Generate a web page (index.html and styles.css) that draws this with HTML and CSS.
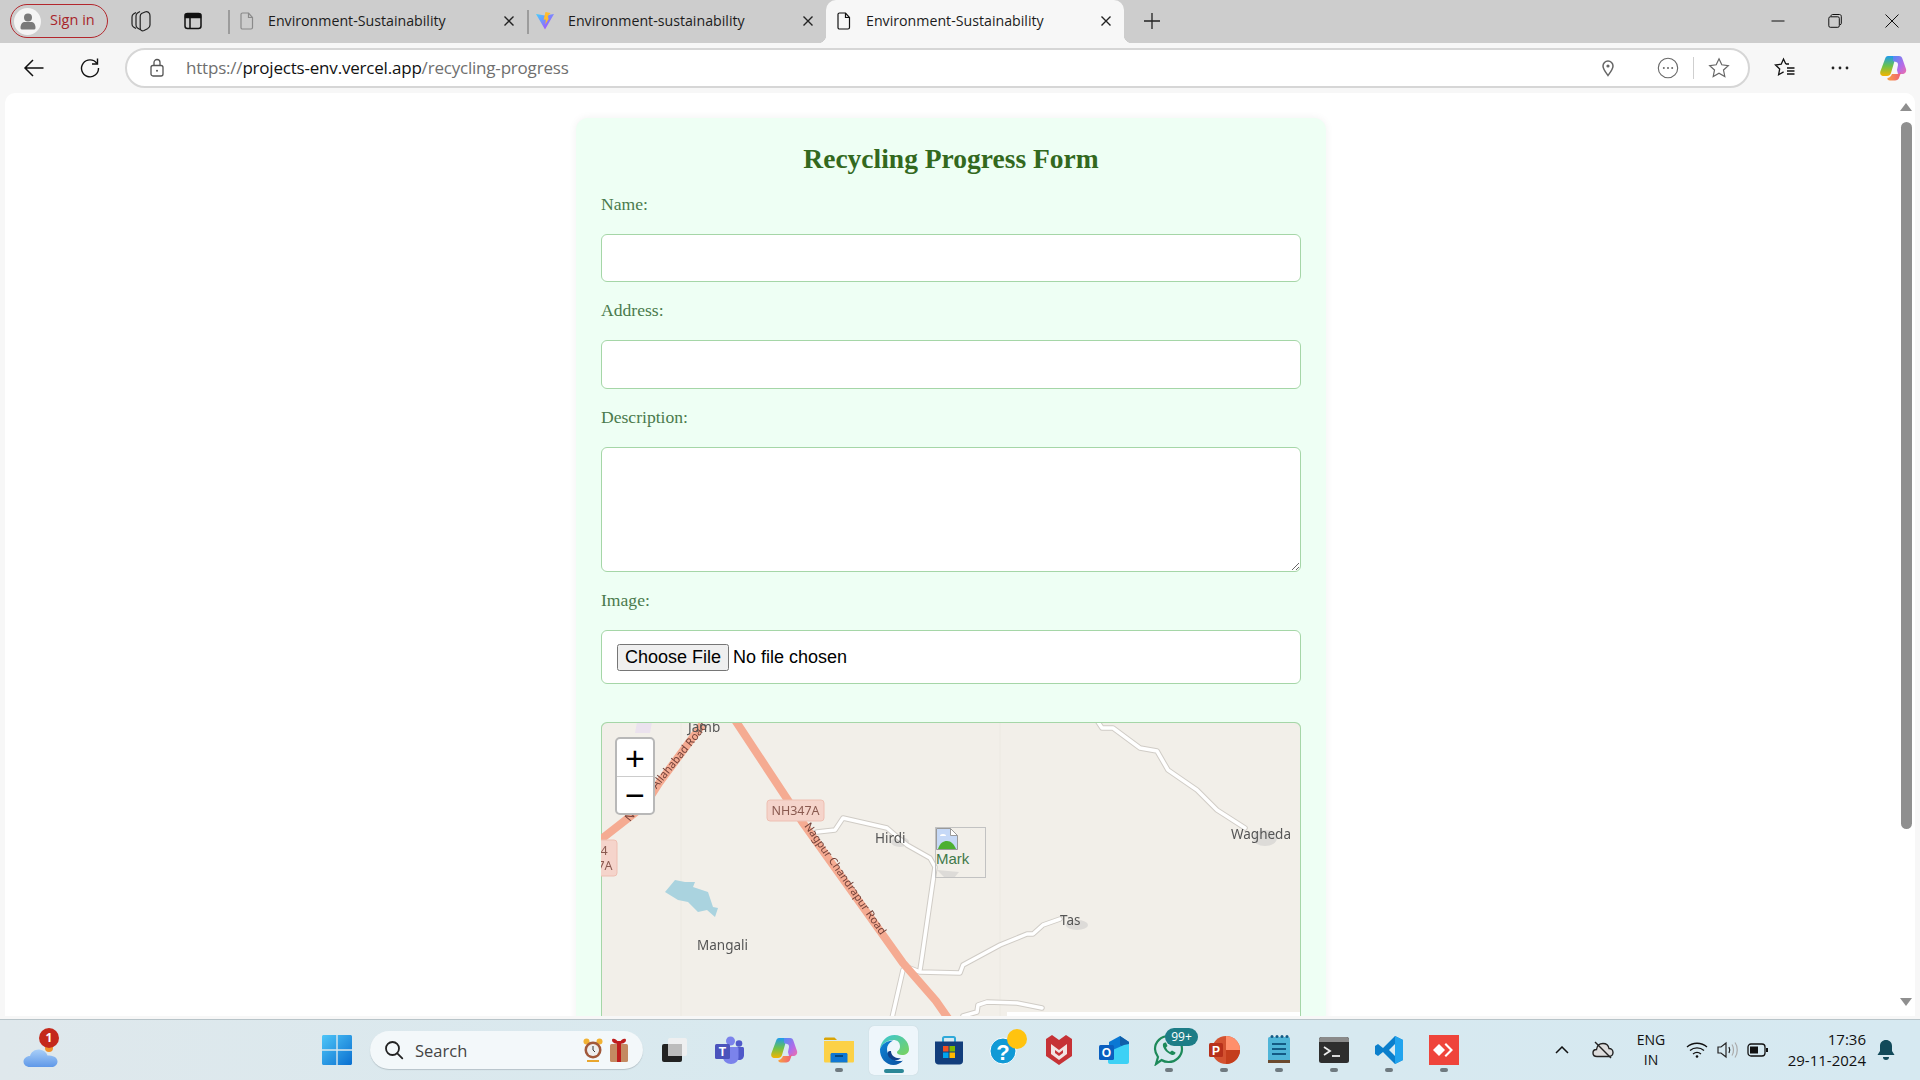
FILE: index.html
```html
<!DOCTYPE html>
<html lang="en">
<head>
<meta charset="utf-8">
<title>Environment-Sustainability</title>
<link rel="stylesheet" href="styles.css">
</head>
<body>
<div class="window">
  <header class="tabstrip">
    <div class="signin">
      <span class="avatar"><svg viewBox="0 0 20 20" width="20" height="20"><circle cx="10" cy="6.500" r="4" fill="#7a7a7a"/><path d="M2.500 17c0-4 2-6 4-6h7c2 0 4 2 4 6 0 1-1 1.500-2 1.500H4.500c-1 0-2-.5-2-1.500z" fill="#7a7a7a"/></svg></span>
      <span class="signin-text">Sign in</span>
    </div>
    <span class="strip-btn first"><svg viewBox="0 0 24 24" width="24" height="24" fill="none" stroke="#222" stroke-width="1.200"><path d="M7 3.500L4.500 5C3.500 5.700 3 6.500 3 8v7c0 1.500.5 2.500 1.500 3L7 19.500"/><path d="M11 2.500L8.500 4C7.500 4.700 7 5.500 7 7v9c0 1.500.5 2.500 1.500 3l2.500 1.500"/><path d="M12.500 4.500L16 3c2-.8 3.500 0 4.500 1.500.5 1 .5 2 .5 3V16c0 2-1 3-2.500 3.800L15 21.500c-2 .8-3.800-.2-3.800-2.500V7.500c0-1.500.4-2.400 1.300-3z"/></svg></span>
    <span class="strip-btn"><svg viewBox="0 0 20 20" width="20" height="20" fill="none" stroke="#111" stroke-width="1.500"><rect x="2" y="2.500" width="16" height="15" rx="2.500"/><path d="M2.500 3.500h15v3h-15z" fill="#111"/><path d="M7 6.500v11"/></svg></span>
    <div class="tab first-tab">
      <svg class="fav" viewBox="0 0 18 20" width="18" height="20" fill="none" stroke="#8a8a8a" stroke-width="1.200"><path d="M4.500 2h6l4 4.500v10c0 1-.7 1.500-1.500 1.500H4.500C3.700 18 3 17.500 3 16.500v-13C3 2.700 3.700 2 4.500 2z"/><path d="M10.500 2v4.500h4"/></svg>
      <span class="tab-title">Environment-Sustainability</span>
      <svg class="tab-x" viewBox="0 0 12 12" width="12" height="12" stroke="#222" stroke-width="1.400"><path d="M1.500 1.500l9 9M10.500 1.500l-9 9"/></svg>
    </div>
    <div class="tab second-tab">
      <svg class="fav" viewBox="0 0 20 20" width="20" height="20"><defs><linearGradient id="viteA" x1="0" y1="0" x2="1" y2="1"><stop offset="0" stop-color="#41d1ff"/><stop offset="1" stop-color="#bd34fe"/></linearGradient></defs><path d="M1 3l9 1.600L19 3l-9 15.500z" fill="url(#viteA)"/><path d="M10.500 1l5 .9-2.700 3.400.8 2.600-3.300 5.500.6-5-2.300.3z" fill="#ffbd2e"/></svg>
      <span class="tab-title">Environment-sustainability</span>
      <svg class="tab-x" viewBox="0 0 12 12" width="12" height="12" stroke="#222" stroke-width="1.400"><path d="M1.500 1.500l9 9M10.500 1.500l-9 9"/></svg>
    </div>
    <div class="tab active">
      <svg class="fav" viewBox="0 0 18 20" width="18" height="20" fill="none" stroke="#111" stroke-width="1.200"><path d="M4.500 2h6l4 4.500v10c0 1-.7 1.500-1.500 1.500H4.500C3.700 18 3 17.500 3 16.500v-13C3 2.700 3.700 2 4.500 2z"/><path d="M10.500 2v4.500h4"/></svg>
      <span class="tab-title">Environment-Sustainability</span>
      <svg class="tab-x" viewBox="0 0 12 12" width="12" height="12" stroke="#222" stroke-width="1.400"><path d="M1.500 1.500l9 9M10.500 1.500l-9 9"/></svg>
    </div>
    <span class="strip-btn newtab"><svg viewBox="0 0 20 20" width="20" height="20" stroke="#222" stroke-width="1.300"><path d="M10 2v16M2 10h16"/></svg></span>
    <div class="winctl">
      <span class="win-btn"><svg viewBox="0 0 14 14" width="14" height="14" stroke="#111" stroke-width="1"><path d="M.5 7h13"/></svg></span>
      <span class="win-btn"><svg viewBox="0 0 14 14" width="14" height="14" fill="none" stroke="#111" stroke-width="1"><rect x=".8" y="2.800" width="10.500" height="10.500" rx="1.500"/><path d="M3 2.500V2c0-.8.6-1.500 1.500-1.500h7c1 0 1.800.8 1.800 1.800v7c0 .8-.5 1.400-1.300 1.500"/></svg></span>
      <span class="win-btn"><svg viewBox="0 0 14 14" width="14" height="14" stroke="#111" stroke-width="1"><path d="M.5.500l13 13M13.500.500l-13 13"/></svg></span>
    </div>
  </header>

  <nav class="toolbar">
    <span class="tool back"><svg viewBox="0 0 22 22" width="22" height="22" fill="none" stroke="#111" stroke-width="1.500"><path d="M20.500 11H2M10 3l-8 8 8 8"/></svg></span>
    <span class="tool reload"><svg viewBox="0 0 22 22" width="22" height="22" fill="none" stroke="#111" stroke-width="1.400"><path d="M18 6.500A8.500 8.500 0 1 0 19.500 11"/><path d="M18.500 1.500V7h-5.500"/></svg></span>
    <div class="address">
      <svg class="lock" viewBox="0 0 16 20" width="16" height="20" fill="none" stroke="#555" stroke-width="1.300"><rect x="2" y="7.500" width="12" height="10.500" rx="2"/><path d="M5 7.500V4.500a3 3 0 0 1 6 0v3"/><circle cx="8" cy="12.800" r="1" fill="#555" stroke="none"/></svg>
      <span class="url"><span class="dim">https://</span>projects-env.vercel.app<span class="dim">/recycling-progress</span></span>
      <svg class="addr-ico pin" viewBox="0 0 14 18" width="14" height="18" fill="none" stroke="#666" stroke-width="1.500"><path d="M7 16.500C4 12.500 2 10 2 7a5 5 0 0 1 10 0c0 3-2 5.500-5 9.500z"/><circle cx="7" cy="7" r="1.600" fill="#666" stroke="none"/></svg>
      <svg class="addr-ico more" viewBox="0 0 22 22" width="22" height="22" fill="none" stroke="#666" stroke-width="1.100"><circle cx="11" cy="11" r="9.700"/><circle cx="6.800" cy="11" r="1" fill="#666" stroke="none"/><circle cx="11" cy="11" r="1" fill="#666" stroke="none"/><circle cx="15.200" cy="11" r="1" fill="#666" stroke="none"/></svg>
      <span class="addr-sep"></span>
      <svg class="addr-ico star" viewBox="0 0 22 22" width="22" height="22" fill="none" stroke="#666" stroke-width="1.200"><path d="M11 1.800l2.800 6 6.500.8-4.800 4.400 1.300 6.500-5.800-3.200-5.800 3.200L6.500 13 1.700 8.600l6.500-.8z"/></svg>
    </div>
    <span class="tool favs"><svg viewBox="0 0 22 22" width="22" height="22" fill="none" stroke="#111" stroke-width="1.300"><path d="M11.800 7L9.500 2 7.200 7.200 1.500 8l4.200 3.900-1.100 5.800 5-2.800"/><path d="M11.800 7H15M13 11h7.500M13 14h7.500M13 17h7.500"/></svg></span>
    <span class="tool dots"><svg viewBox="0 0 18 4" width="18" height="4" fill="#222"><circle cx="2" cy="2" r="1.400"/><circle cx="9" cy="2" r="1.400"/><circle cx="16" cy="2" r="1.400"/></svg></span>
    <span class="tool copilot"><svg viewBox="0 0 28 28" width="28" height="28"><defs><linearGradient id="copA" x1="0" y1="0" x2="0" y2="1"><stop offset="0" stop-color="#1d9bf0"/><stop offset=".5" stop-color="#6cc24a"/><stop offset="1" stop-color="#f4b400"/></linearGradient><linearGradient id="copB" x1="0" y1="0" x2="1" y2="1"><stop offset="0" stop-color="#4f8cf7"/><stop offset=".6" stop-color="#b46be8"/><stop offset="1" stop-color="#f06fa8"/></linearGradient><linearGradient id="copC" x1="0" y1="0" x2="1" y2="0"><stop offset="0" stop-color="#f9a03f"/><stop offset="1" stop-color="#ef5b7b"/></linearGradient></defs><path d="M9 2h8l-5 17c-.5 2-2 3-4 3H5C2 22 .5 20 1.500 17L6 5c.5-2 1.500-3 3-3z" fill="url(#copA)"/><path d="M14 2h6c2 0 3 1 3.500 3L27 15c.8 2.800-1 5-3.500 5H19l-1-4 1-5c.3-2-1-3-2-3l-3-1z" fill="url(#copB)"/><path d="M13 20h6c2 0 3-1.500 3.500-3L20 24c-.5 1.500-2 2.500-4 2.500h-5c-2 0-3-1-2.500-2.500 1.500 0 3.500-1.500 4.500-4z" fill="url(#copC)"/></svg></span>
  </nav>

  <main class="viewport">
    <div class="page">
      <section class="card">
        <h2 class="card-title">Recycling Progress Form</h2>
        <form class="form">
          <div class="field">
            <label class="label" for="f-name">Name:</label>
            <input class="control text-input" id="f-name" type="text">
          </div>
          <div class="field">
            <label class="label" for="f-address">Address:</label>
            <input class="control text-input" id="f-address" type="text">
          </div>
          <div class="field">
            <label class="label" for="f-desc">Description:</label>
            <textarea class="control text-area" id="f-desc"></textarea>
          </div>
          <div class="field">
            <label class="label" for="f-image">Image:</label>
            <input class="control file-input" id="f-image" type="file">
          </div>
          <div class="map">
            <svg class="map-art" viewBox="601 722 700 296" width="700" height="296">
              <path d="M681 722v296M1000 722v296" stroke="#ece9e2" stroke-width="1" fill="none"/>
              <path d="M637 722h15l-2 11h-15z" fill="#ebe2ee"/>
              <path d="M665 892l10-12 10 2h10l-2 5 15 5 5 15 5 1-3 9-8-7-9 2-10-10-10-2z" fill="#aad3df"/>
              <g fill="#dddbd8">
                <path d="M937 870l22 2 -5 6-10-1z"/>
                <ellipse cx="1265" cy="838" rx="12" ry="8"/>
                <ellipse cx="1077" cy="925" rx="11" ry="5"/>
                <ellipse cx="900" cy="842" rx="9" ry="5"/>
              </g>
              <g fill="none" stroke="#d0ccc6" stroke-width="5.500" stroke-linejoin="round" stroke-linecap="round">
                <path d="M817 832l18-2 8-12 44 10 20 17 23 13 5 9-13 90-2 13"/>
                <path d="M903 970l-11 48M907 967l13 5 40 1 3-8 37-20 27-11h6l10-9 17-6"/>
                <path d="M1098 722l4 6h11l27 20 17 3 11 19 29 20 20 20 28 18"/>
                <path d="M963 1016l14-4 1-7 9-3 30 1 25 5"/>
              </g>
              <g fill="none" stroke="#fff" stroke-width="3.500" stroke-linejoin="round" stroke-linecap="round">
                <path d="M817 832l18-2 8-12 44 10 20 17 23 13 5 9-13 90-2 13"/>
                <path d="M903 970l-11 48M907 967l13 5 40 1 3-8 37-20 27-11h6l10-9 17-6"/>
                <path d="M1098 722l4 6h11l27 20 17 3 11 19 29 20 20 20 28 18"/>
                <path d="M963 1016l14-4 1-7 9-3 30 1 25 5"/>
              </g>
              <g fill="none" stroke="#f5ab92" stroke-width="8">
                <path d="M735 720l68 103 100 140 33 38 14 20"/>
                <path d="M600 840l45-35 14-22 43-58"/>
              </g>
              <g class="road-label">
                <text transform="translate(804 826) rotate(55)">Nagpur Chandrapur Road</text>
                <text transform="translate(630 822) rotate(-51)">Nagpur Allahabad Road</text>
              </g>
              <rect x="767" y="800" width="57" height="21" rx="3" fill="#f5d4cb" stroke="#eebfb2"/>
              <text class="shield" x="795.500" y="815" text-anchor="middle">NH347A</text>
              <rect x="596" y="840" width="21" height="36" rx="3" fill="#f5d4cb" stroke="#eebfb2"/>
              <text class="shield" x="604" y="855" text-anchor="middle">4</text>
              <text class="shield" x="605" y="870" text-anchor="middle">7A</text>
              <g class="place">
                <text x="688" y="732">Jamb</text>
                <text x="875" y="843">Hirdi</text>
                <text x="697" y="950">Mangali</text>
                <text x="1231" y="839">Wagheda</text>
                <text x="1060" y="925">Tas</text>
              </g>
              <rect x="1007" y="1012" width="293" height="5" fill="#fff"/>
            </svg>
            <div class="zoom-ctl">
              <span class="zoom-btn">+</span>
              <span class="zoom-btn">−</span>
            </div>
            <div class="marker">
              <svg class="broken" viewBox="0 0 22 22" width="22" height="22"><path d="M.5.500h14l7 7v14H.5z" fill="#c6d9f7" stroke="#9a9a9a"/><path d="M14.500.500v7h7z" fill="#fff" stroke="#9a9a9a"/><path d="M4 8a3 2 0 0 1 6 0z" fill="#fff"/><path d="M2 21c2-6 5-8 9-8s7 3 9 8z" fill="#4caf32"/></svg>
              <span class="marker-alt">Mark</span>
            </div>
          </div>
        </form>
      </section>
    </div>
    <aside class="scrollbar">
      <span class="arrow up"></span>
      <span class="thumb"></span>
      <span class="arrow down"></span>
    </aside>
  </main>

  <footer class="taskbar">
    <div class="weather">
      <svg viewBox="0 0 36 26" width="36" height="26"><defs><linearGradient id="cloudA" x1="0" y1="0" x2="0" y2="1"><stop offset="0" stop-color="#a9cff8"/><stop offset="1" stop-color="#5f98e8"/></linearGradient></defs><circle cx="26" cy="6" r="4" fill="#f0922c"/><path d="M7 25c-4 0-6.500-2.500-6.500-5.500S3.500 14 7 14c1-4 5-7 9.500-6.500 4 .5 7 2.500 8 6 5 0 10 1.500 10 6 0 3.500-3 5.500-6 5.500z" fill="url(#cloudA)"/></svg>
      <span class="weather-badge">1</span>
    </div>
    <span class="slot start"><svg viewBox="0 0 30 30" width="30" height="30"><defs><linearGradient id="winA" x1="0" y1="0" x2="1" y2="1"><stop offset="0" stop-color="#4fc6f8"/><stop offset="1" stop-color="#0a6fd0"/></linearGradient></defs><path d="M0 1.500C0 .7.700 0 1.500 0h12.800v14.300H0zM15.700 0h12.800c.8 0 1.500.7 1.500 1.500v12.800H15.700zM0 15.700h14.300V30H1.500C.7 30 0 29.300 0 28.500zM15.700 15.700H30v12.800c0 .8-.7 1.500-1.500 1.500H15.700z" fill="url(#winA)"/></svg></span>
    <div class="search">
      <svg viewBox="0 0 20 20" width="20" height="20" fill="none" stroke="#222" stroke-width="1.800"><circle cx="8.500" cy="8.500" r="6.500"/><path d="M13.300 13.300l5 5" stroke-linecap="round"/></svg>
      <span class="search-text">Search</span>
      <svg class="clock" viewBox="0 0 20 24" width="20" height="24"><circle cx="3.500" cy="3.500" r="3" fill="#f2b233"/><circle cx="16.500" cy="3.500" r="3" fill="#f2b233"/><circle cx="10" cy="12" r="8.500" fill="#a1583a"/><circle cx="10" cy="12" r="6" fill="#eee"/><path d="M10 8v4l2 2" stroke="#333" fill="none"/><path d="M4 22h12v2H4z" fill="#e9a62d"/></svg>
      <svg class="gift" viewBox="0 0 20 24" width="20" height="24"><rect x="1" y="6" width="18" height="18" rx="1.500" fill="#c48a62"/><rect x="8" y="3" width="4" height="21" fill="#bf1e1e"/><path d="M10 6C7 6 3 5 3 2c0-2 5-2 7 4zM10 6c3 0 7-1 7-4 0-2-5-2-7 4z" fill="#bf1e1e"/></svg>
    </div>
    <div class="apps">
      <span class="slot"><svg viewBox="0 0 28 28" width="28" height="28"><rect x="2" y="8" width="20" height="18" rx="2" fill="#222"/><rect x="8" y="2" width="19" height="18" rx="2" fill="#f0f0f0" opacity=".9"/><rect x="8" y="8" width="14" height="12" fill="#bcbcbc"/></svg></span>
      <span class="slot"><svg viewBox="0 0 30 28" width="30" height="28"><circle cx="16.500" cy="5" r="4.500" fill="#7b83eb"/><circle cx="25" cy="7.500" r="3.300" fill="#5059c9"/><path d="M20 11h8.500c.8 0 1.500.7 1.500 1.500V19c0 3-2 5-5 5-2 0-3.500-1-4.500-2z" fill="#5059c9"/><path d="M9 11h14c.8 0 1.500.7 1.500 1.500V21c0 4-3 7-7.500 7S9 25 9 21z" fill="#7b83eb"/><rect x="1" y="8" width="15" height="15" rx="1.500" fill="#4b53bc"/><text class="teams-t" x="8.500" y="20" text-anchor="middle">T</text></svg></span>
      <span class="slot"><svg viewBox="0 0 28 28" width="28" height="28"><path d="M9 2h8l-5 17c-.5 2-2 3-4 3H5C2 22 .5 20 1.500 17L6 5c.5-2 1.500-3 3-3z" fill="url(#copA)"/><path d="M14 2h6c2 0 3 1 3.500 3L27 15c.8 2.800-1 5-3.500 5H19l-1-4 1-5c.3-2-1-3-2-3l-3-1z" fill="url(#copB)"/><path d="M13 20h6c2 0 3-1.500 3.500-3L20 24c-.5 1.500-2 2.500-4 2.500h-5c-2 0-3-1-2.500-2.500 1.500 0 3.500-1.500 4.500-4z" fill="url(#copC)"/></svg></span>
      <span class="slot dot"><svg viewBox="0 0 30 30" width="30" height="30"><path d="M0 4c0-1 .7-1.500 1.500-1.500h9L13 5h-13z" fill="#d9a406"/><path d="M0 6h30v20c0 1-.7 1.500-1.500 1.500h-27C.7 27.500 0 27 0 26z" fill="#fcd146"/><path d="M8 18h14c1 0 1.500.7 1.500 1.500v8h-17v-8c0-.8.700-1.500 1.500-1.500z" fill="#0f78d4"/><path d="M11 21h8" stroke="#06375f" stroke-width="1.500"/></svg></span>
      <span class="slot on"><svg viewBox="0 0 32 32" width="32" height="32"><defs><linearGradient id="edgeA" x1="0" y1="0" x2="1" y2="1"><stop offset="0" stop-color="#38c6d8"/><stop offset="1" stop-color="#7ad35b"/></linearGradient><linearGradient id="edgeB" x1="0" y1="0" x2="1" y2="1"><stop offset="0" stop-color="#0f86d8"/><stop offset="1" stop-color="#0a4f9e"/></linearGradient></defs><path d="M2 15C3 7 9 1 16.500 1 25 1 31 8 31 15c0 4-3 6-7 6-3 0-5-1-5-2.500 0-2 3-2 3-6C22 8 19 6 15.500 6 9 6 4 10 2 15z" fill="url(#edgeA)"/><path d="M2 15C4 10 9 6.500 15 6.500c-4 2-6 5-6 8.500 0 6 5 11 11 12 2 .3 4 0 5-.5-2.500 2.800-6 4.500-9.500 4.500C8 31 1.500 24 2 15z" fill="url(#edgeB)"/><path d="M13 17c0 5 5 8 10 7-3 3-8 3-11 0-3-2.500-3.500-8 1-7z" fill="#0e3f8a"/></svg></span>
      <span class="slot"><svg viewBox="0 0 30 30" width="30" height="30"><path d="M9 7V3.500C9 2.500 9.700 2 10.500 2h9c.8 0 1.500.5 1.500 1.500V7" fill="none" stroke="#2ea9d9" stroke-width="2"/><path d="M1 6.500h28V26c0 2-1.500 3.500-3.500 3.500h-21C2.500 29.500 1 28 1 26z" fill="#123e7c"/><rect x="9" y="11" width="5.500" height="5.500" fill="#f25022"/><rect x="15.500" y="11" width="5.500" height="5.500" fill="#7fba00"/><rect x="9" y="17.500" width="5.500" height="5.500" fill="#00a4ef"/><rect x="15.500" y="17.500" width="5.500" height="5.500" fill="#ffb900"/></svg></span>
      <span class="slot helpapp"><svg viewBox="0 0 30 30" width="30" height="30"><circle cx="14" cy="16" r="13" fill="#109ad6"/><circle cx="14" cy="16" r="13" fill="none" stroke="#fff" stroke-width="1"/><text class="help-q" x="14" y="25" text-anchor="middle">?</text></svg><span class="help-dot"></span></span>
      <span class="slot"><svg viewBox="0 0 28 30" width="28" height="30"><path d="M1 4l6-4 7 5 7-5 6 4v17L14 30 1 21z" fill="#c63236"/><path d="M6 9l8 6 8-6v10l-8 6-8-6z" fill="#f1e4e4"/><path d="M10 15l4 3 4-3v3l-4 3-4-3z" fill="#c63236"/></svg></span>
      <span class="slot"><svg viewBox="0 0 32 30" width="32" height="30"><path d="M11 7l11-6 9 6v12H11z" fill="#0a78d4"/><path d="M22 1l9 6v8l-9-5z" fill="#0f5ea8"/><path d="M10 17l16-7 5-1v18c0 1-1 2-2 2H12c-1 0-2-1-2-2z" fill="#3dd1f5"/><rect x="1" y="10" width="15" height="15" rx="1.500" fill="#0a5fc0"/><text class="out-o" x="8.500" y="22" text-anchor="middle">O</text></svg></span>
      <span class="slot dot wa"><svg viewBox="0 0 32 32" width="32" height="32" fill="none" stroke="#1d8a5a" stroke-width="2.200"><path d="M3 30l2-7C3 20 2 17 2 15 2 8 8 2 15.500 2S29 8 29 15s-6 13-13.500 13c-3 0-5-.7-7-2z"/><path d="M10 10c-1 3 3 9 9 11 2 .5 3.500-1 3.500-2.500L19 16.500l-2 1.500c-1.500-.5-3.500-3-4-4.500L14.500 12 13 8.500c-1.500 0-2.500.5-3 1.500z" fill="#1d8a5a" stroke="none"/></svg><span class="wa-badge">99+</span></span>
      <span class="slot dot"><svg viewBox="0 0 32 30" width="32" height="30"><circle cx="18" cy="15" r="14" fill="#d35230"/><path d="M18 1a14 14 0 0 1 14 14H18z" fill="#ff8f6b"/><path d="M18 15h14a14 14 0 0 1-14 14z" fill="#c43e1c"/><rect x="1" y="8" width="14" height="14" rx="1.500" fill="#b7301a"/><text class="ppt-p" x="8" y="19.500" text-anchor="middle">P</text></svg></span>
      <span class="slot dot"><svg viewBox="0 0 24 32" width="24" height="32"><rect x="1" y="3" width="22" height="26" rx="1.500" fill="#4fb5d8"/><path d="M1 26h22v3H1z" fill="#6b4a2e"/><g fill="#135a84"><circle cx="5" cy="2.500" r="1.500"/><circle cx="10" cy="2.500" r="1.500"/><circle cx="15" cy="2.500" r="1.500"/><circle cx="20" cy="2.500" r="1.500"/><rect x="5" y="9" width="14" height="2"/><rect x="5" y="14" width="14" height="2"/><rect x="5" y="19" width="14" height="2"/></g></svg></span>
      <span class="slot dot"><svg viewBox="0 0 32 28" width="32" height="28"><rect x="1" y="1" width="30" height="26" rx="2.500" fill="#2e2e2e"/><path d="M1 3.500C1 2 2 1 3.500 1h25C30 1 31 2 31 3.500V6H1z" fill="#8a8a8a"/><path d="M6 11l6 4-6 4" fill="none" stroke="#eee" stroke-width="1.800"/><path d="M14 20h8" stroke="#eee" stroke-width="1.800"/></svg></span>
      <span class="slot dot"><svg viewBox="0 0 30 30" width="30" height="30"><path d="M21 1l8 4v20l-8 4L9 17l-5 4-3-2v-8l3-2 5 4z" fill="#0b7fcc"/><path d="M21 1l8 4v20l-8 4z" fill="#22a4ee"/><path d="M21 9l-6 6 6 6z" fill="#d8ebf3"/></svg></span>
      <span class="slot dot"><svg viewBox="0 0 30 30" width="30" height="30"><rect width="30" height="30" fill="#ef443b"/><path d="M10 9l6 6-6 6-6-6z" fill="#fff"/><path d="M17 8l7 7-7 7-1.500-1.500 5.500-5.500-5.500-5.500z" fill="#fff"/></svg></span>
    </div>
    <div class="tray">
      <span class="tray-slot chev"><svg viewBox="0 0 14 8" width="14" height="8" fill="none" stroke="#111" stroke-width="1.500"><path d="M1 7l6-6 6 6"/></svg></span>
      <span class="tray-slot cloudoff"><svg viewBox="0 0 22 18" width="22" height="18" fill="none" stroke="#222" stroke-width="1.400"><path d="M5 15.500C2.500 15.500 1 14 1 12s1.500-3.500 3.500-3.500C5 5 7.500 2.500 11 2.500c3 0 5.500 2 6 5 2.500 0 4 2 4 4s-1.500 4-4 4z" fill="#ddd"/><path d="M3 1l16 16"/></svg></span>
      <span class="tray-slot lang">ENG<br>IN</span>
      <span class="tray-slot wifi"><svg viewBox="0 0 22 18" width="22" height="18" fill="none" stroke="#111" stroke-width="1.300"><path d="M1 6c5.500-5 14.500-5 20 0M4 9.500c4-3.500 10-3.500 14 0M7 13c2.500-2 5.500-2 8 0"/><circle cx="11" cy="15.500" r="1.300" fill="#111" stroke="none"/></svg></span>
      <span class="tray-slot vol"><svg viewBox="0 0 22 20" width="22" height="20" fill="none" stroke="#222" stroke-width="1.200"><path d="M2 7h3l5-4v14l-5-4H2z"/><path d="M13 7c1 2 1 4 0 6"/><path d="M16 4.500c2 3 2 8 0 11M19 2.500c3 4 3 11 0 15" stroke="#aaa"/></svg></span>
      <span class="tray-slot bat"><svg viewBox="0 0 22 14" width="22" height="14" fill="none" stroke="#111" stroke-width="1.300"><rect x="1" y="1" width="17" height="12" rx="3"/><rect x="3" y="3.500" width="8" height="7" fill="#111" stroke="none"/><path d="M20 5v4" stroke-width="2"/></svg></span>
      <span class="tray-slot clocktext">17:36<br>29-11-2024</span>
      <span class="tray-slot bell"><svg viewBox="0 0 18 22" width="18" height="22" fill="#124a5a"><path d="M9 1c-3.500 0-6 2.500-6 6v5l-2.500 4h17L15 12V7c0-3.500-2.500-6-6-6z"/><path d="M6 18h6a3 3 0 0 1-6 0z"/></svg></span>
    </div>
  </footer>
</div>
</body>
</html>
```

FILE: styles.css
```css
* { box-sizing: border-box; }
html, body { margin: 0; height: 100%; overflow: hidden; }
body { font-family: "Open Sans", "Noto Sans", sans-serif; }
.window { width: 1920px; height: 1080px; display: flex; flex-direction: column; background: #f7f7f7; }

/* tab strip */
.tabstrip { height: 43px; flex: none; background: #cdcdcd; display: flex; align-items: center; padding: 0 0 0 10px; }
.signin { width: 98px; height: 34px; border: 1.500px solid #b3272d; border-radius: 17px; display: flex; align-items: center; padding-left: 3px; gap: 9px; margin-bottom: 1px; }
.avatar { width: 27px; height: 27px; border-radius: 50%; background: #f4f4f4; display: flex; align-items: center; justify-content: center; }
.signin-text { font-size: 14.500px; line-height: 20px; color: #a8262b; position: relative; top: -1px; }
.strip-btn { width: 44px; height: 43px; display: flex; align-items: center; justify-content: center; margin-left: 8px; padding-bottom: 1px; }
.strip-btn.first { margin-left: 11px; }
.strip-btn.newtab { margin-left: 6px; }
.tab { width: 299px; height: 43px; display: flex; align-items: center; padding: 0 12px 2px 10px; position: relative; font-size: 14.200px; color: #1c1c1c; }
.tab::before { content: ""; position: absolute; left: 0; top: 10px; height: 24px; width: 2px; background: #9c9c9c; }
.first-tab { margin-left: 13px; }
.second-tab .fav { margin-left: -2px; margin-right: 13px; }
.tab.active { background: #f7f7f7; border-radius: 10px 10px 0 0; width: 298px; padding-left: 9px; }
.tab.active .fav { margin-right: 13px; }
.tab.active::before { left: -8px; top: auto; bottom: 0; width: 8px; height: 8px; background: radial-gradient(circle at 0 0, #cdcdcd 8px, #f7f7f7 8.500px); }
.tab.active::after { content: ""; position: absolute; right: -8px; bottom: 0; width: 8px; height: 8px; background: radial-gradient(circle at 100% 0, #cdcdcd 8px, #f7f7f7 8.500px); }
.fav { flex: none; margin-right: 12px; }
.tab-title { flex: 1; white-space: nowrap; }
.tab-x { flex: none; }
.winctl { margin-left: auto; display: flex; }
.win-btn { width: 57px; height: 43px; display: flex; align-items: center; justify-content: center; padding-bottom: 1px; }

/* toolbar */
.toolbar { height: 50px; flex: none; display: flex; align-items: center; background: #f7f7f7; padding-bottom: 1px; }
.tool { display: flex; align-items: center; justify-content: center; width: 44px; height: 44px; flex: none; }
.back { margin-left: 12px; }
.reload { margin-left: 12px; }
.address { width: 1625px; height: 40px; margin-left: 13px; background: #fff; border: 2px solid #d6d6d6; border-radius: 20px; display: flex; align-items: center; padding: 0 18px 0 22px; }
.lock { flex: none; }
.url { margin-left: 21px; font-size: 17px; line-height: 22px; color: #111; white-space: nowrap; letter-spacing: -.2px; }
.dim { color: #6f6f6f; }
.addr-ico { flex: none; }
.pin { margin-left: auto; }
.more { margin-left: 42px; }
.addr-sep { width: 1px; height: 22px; background: #cfcfcf; margin-left: 14px; }
.star { margin-left: 14px; }
.favs { margin-left: 13px; }
.dots { margin-left: 11px; }
.copilot { margin-left: 9px; }

/* page viewport */
.viewport { flex: none; height: 923px; margin: 0 5px; background: #fff; border-radius: 10px 10px 0 0; display: flex; overflow: hidden; }
.page { flex: 1; min-width: 0; padding-top: 25px; height: 923px; overflow: hidden; }
.card { width: 750px; margin: 0 auto; padding: 26px 25px 40px; background: #eefff4; border-radius: 12px; box-shadow: 0 0 8px rgba(0,0,0,.06); }
.card-title { margin: 0 0 20px; text-align: center; font: bold 27.500px/30px "Liberation Serif", serif; color: #33691e; }
.field { margin-bottom: 18px; }
.label { display: block; font: 17.600px/20px "Liberation Serif", serif; color: #4a7a4c; margin-bottom: 20px; }
.control { display: block; width: 100%; background: #fff; border: 1px solid #a5d6a7; border-radius: 6px; margin: 0; }
.text-input { height: 48.400px; }
.text-area { height: 125.500px; }
.file-input { height: 54px; padding: 13px 15px; font: 18px "Liberation Sans", sans-serif; color: #000; }

/* map */
.map { position: relative; width: 700px; height: 296px; margin-top: 38px; background: #f2efe9; border-top: 1px solid #a5d6a7; overflow: hidden; border-radius: 6px 6px 0 0; box-shadow: inset 1px 0 0 #a5d6a7, inset -1px 0 0 #a5d6a7; }
.map-art { display: block; position: absolute; left: 0; top: -1px; filter: blur(.35px); }
.road-label { font: 11px "Noto Sans", sans-serif; fill: #74423a; }
.shield { font: 12.500px "Noto Sans", sans-serif; fill: #8a5a50; }
.place { font: 13.500px "Noto Sans", sans-serif; fill: #555; }
.zoom-ctl { position: absolute; left: 14px; top: 14px; width: 40px; height: 78px; background: #fff; border: 2px solid #b8b8b8; border-radius: 5px; display: flex; flex-direction: column; }
.zoom-btn { flex: 1; display: flex; align-items: center; justify-content: center; font: 34px/1 "Liberation Sans", sans-serif; color: #000; }
.zoom-btn + .zoom-btn { border-top: 1px solid #ccc; }
.marker { position: absolute; left: 334px; top: 104px; width: 51px; height: 51px; border: 1px solid #c2c2c2; overflow: hidden; color: #41794a; font: 15px/17px "Liberation Sans", sans-serif; }
.broken { display: block; }
.marker-alt { display: block; white-space: nowrap; }

/* scrollbar */
.scrollbar { width: 18px; flex: none; background: #fff; position: relative; display: flex; flex-direction: column; align-items: center; padding-top: 10px; }
.arrow { width: 0; height: 0; border-left: 6px solid transparent; border-right: 6px solid transparent; }
.arrow.up { border-bottom: 8px solid #8f8f8f; }
.arrow.down { border-top: 8px solid #8f8f8f; position: absolute; top: 905px; }
.thumb { width: 11px; height: 707px; background: #8f8f8f; border-radius: 6px; margin-top: 11px; }

/* taskbar */
.taskbar { flex: 1; min-height: 0; margin-top: 3px; border-top: 1px solid #b8c4c9; background: linear-gradient(90deg, #dfe8ec, #d8e9ef 40%, #d6e9f1); display: flex; align-items: center; padding-left: 14px; }
.weather { width: 54px; height: 36px; position: relative; display: flex; align-items: flex-end; justify-content: center; flex: none; }
.weather-badge { position: absolute; left: 25px; top: -4px; width: 20px; height: 20px; border-radius: 50%; background: #c4291c; color: #fff; font: bold 12px/20px "Open Sans", sans-serif; text-align: center; }
.slot { width: 55px; height: 50px; flex: none; display: flex; align-items: center; justify-content: center; position: relative; }
.slot.start { margin-left: 241px; width: 56px; }
.search { width: 273px; height: 38px; margin-left: 5px; flex: none; background: #f3f8fa; border-radius: 19px; box-shadow: 0 1px 1px #b6c3c9; display: flex; align-items: center; padding: 0 14px; }
.search-text { margin-left: 11px; font-size: 16.500px; color: #444; }
.clock { margin-left: auto; }
.gift { margin-left: 6px; }
.apps { display: flex; margin-left: 3px; }
.slot.dot::after { content: ""; position: absolute; bottom: 3px; left: 50%; margin-left: -4px; width: 8px; height: 4px; border-radius: 2px; background: #6f7a80; }
.slot.on::before { content: ""; position: absolute; inset: 1px 3px 0 3px; background: #eef6fb; border-radius: 5px; box-shadow: 0 0 1px #b8c4c9; }
.slot.on svg { position: relative; }
.slot.on::after { content: ""; position: absolute; bottom: 2px; left: 50%; margin-left: -10px; width: 20px; height: 4px; border-radius: 2px; background: #2b8797; }
.help-dot { position: absolute; left: 31px; top: 4px; width: 20px; height: 20px; border-radius: 50%; background: #ffc30f; }
.help-q { font: bold 22px "Liberation Sans", sans-serif; fill: #fff; }
.teams-t, .out-o, .ppt-p { font: bold 12px "Liberation Sans", sans-serif; fill: #fff; }
.wa-badge { position: absolute; left: 24px; top: 3px; width: 33px; height: 18px; border-radius: 9px; background: #1d7d87; color: #fff; font-size: 12px; line-height: 18px; text-align: center; }
.tray { margin-left: auto; display: flex; align-items: center; padding-right: 20px; }
.tray-slot { display: flex; align-items: center; justify-content: center; flex: none; color: #111; }
.chev { width: 40px; }
.cloudoff { width: 42px; }
.lang { width: 54px; display: block; text-align: center; font-size: 14px; line-height: 20px; }
.wifi { width: 30px; margin-left: 4px; }
.vol { width: 30px; }
.bat { width: 32px; }
.clocktext { width: 92px; display: block; text-align: right; font-size: 15px; line-height: 21px; }
.bell { width: 28px; margin-left: 6px; }
```
